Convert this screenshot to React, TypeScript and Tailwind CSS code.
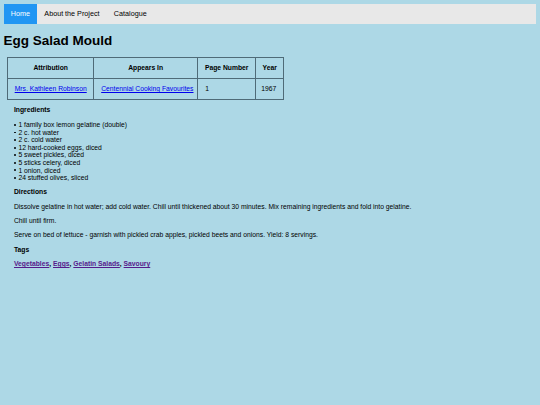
const ingredients = [
  "1 family box lemon gelatine (double)",
  "2 c. hot water",
  "2 c. cold water",
  "12 hard-cooked eggs, diced",
  "5 sweet pickles, diced",
  "5 sticks celery, diced",
  "1 onion, diced",
  "24 stuffed olives, sliced",
];

const directions = [
  "Dissolve gelatine in hot water; add cold water. Chill until thickened about 30 minutes. Mix remaining ingredients and fold into gelatine.",
  "Chill until firm.",
  "Serve on bed of lettuce - garnish with pickled crab apples, pickled beets and onions. Yield: 8 servings.",
];

const tags = ["Vegetables", "Eggs", "Gelatin Salads", "Savoury"];

const Nav: React.FC = () => (
  <div className="flex h-[20.7px] items-stretch bg-[#e8e8e8] text-[7.2px] leading-[8px] text-black">
    <a className="flex items-center bg-[#2196f3] px-[7.2px] text-white">Home</a>
    <a className="flex items-center px-[7.2px]">About the Project</a>
    <a className="flex items-center px-[7.2px]">Catalogue</a>
  </div>
);

const cell = "border border-[#4f6b78] whitespace-nowrap";

const SourceTable: React.FC = () => (
  <table className="ml-[3.6px] mt-[8.5px] w-[276px] table-fixed border-collapse text-[6.75px] leading-[7.7px]">
    <colgroup>
      <col className="w-[86px]" />
      <col className="w-[104px]" />
      <col className="w-[58px]" />
      <col className="w-[28px]" />
    </colgroup>
    <thead>
      <tr className="h-[21px]">
        <th className={`${cell} px-[4px] text-center font-bold`}>Attribution</th>
        <th className={`${cell} px-[4px] text-center font-bold`}>Appears In</th>
        <th className={`${cell} px-[4px] text-center font-bold`}>Page Number</th>
        <th className={`${cell} px-[2px] text-center font-bold`}>Year</th>
      </tr>
    </thead>
    <tbody>
      <tr className="h-[21px]">
        <td className={`${cell} px-[4px] text-center`}>
          <a className="text-[#0000ee] underline">Mrs. Kathleen Robinson</a>
        </td>
        <td className={`${cell} px-[7px] text-left`}>
          <a className="text-[#0000ee] underline">Centennial Cooking Favourites</a>
        </td>
        <td className={`${cell} px-[7px] text-left`}>1</td>
        <td className={`${cell} px-[5px] text-left`}>1967</td>
      </tr>
    </tbody>
  </table>
);

export default function App() {
  return (
    <div className="min-h-screen bg-[#add8e6] p-[3.6px] font-['Liberation_Sans',Arial,sans-serif] text-black">
      <Nav />
      <h1 className="mt-[8.7px] text-[13.5px] font-bold leading-[15.5px]">Egg Salad Mould</h1>
      <SourceTable />

      <div className="px-[10.4px] text-[6.75px] leading-[7.7px]">
        <h3 className="mt-[6.2px] font-bold">Ingredients</h3>
        <ul className="mt-[7.3px] leading-[7.57px]">
          {ingredients.map((item) => (
            <li key={item} className="flex items-center">
              <span className="ml-[0.5px] mr-[2.2px] h-[1.8px] w-[1.8px] rounded-full bg-black" />
              <span>{item}</span>
            </li>
          ))}
        </ul>

        <h3 className="mt-[6.4px] font-bold">Directions</h3>
        {directions.map((text) => (
          <p key={text} className="mt-[6.75px]">{text}</p>
        ))}

        <h3 className="mt-[6.75px] font-bold">Tags</h3>
        <p className="mt-[6.75px] font-bold">
          {tags.map((tag, i) => (
            <span key={tag}>
              <a className="text-[#551a8b] underline">{tag}</a>
              {i < tags.length - 1 && ", "}
            </span>
          ))}
        </p>
      </div>
    </div>
  );
}
